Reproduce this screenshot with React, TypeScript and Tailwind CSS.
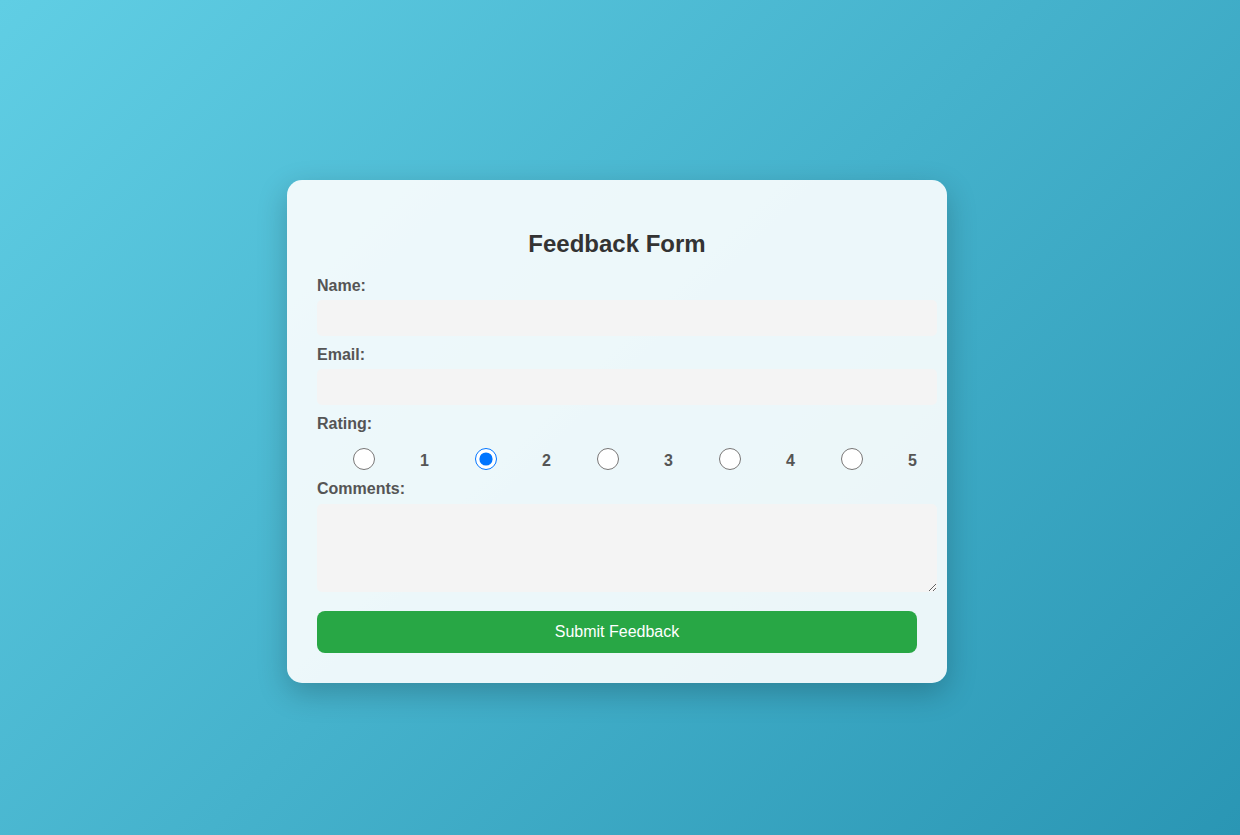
import React from "react";

export default function App() {
  const ratings = [1, 2, 3, 4, 5];
  return (
    <div
      className="min-h-screen w-full flex justify-center items-start pt-[180px] pr-[6px] bg-[linear-gradient(135deg,#60cee4_0%,#2a96b4_100%)]"
      style={{ fontFamily: '"Liberation Sans", Arial, sans-serif', minHeight: 835 }}
    >
      <div className="w-[660px] rounded-[15px] bg-white/90 p-[30px] shadow-[0_10px_30px_rgba(0,0,0,0.22)]">
        <h2 className="text-center text-[24px] leading-[28px] font-bold text-[#333] mt-[20px] mb-[19px]">
          Feedback Form
        </h2>
        <label className="block text-[16px] leading-[18px] font-bold text-[#555] mb-[5px]">Name:</label>
        <input type="text" className="block w-[620px] h-[36px] rounded-[5px] bg-[#f4f4f4] px-[10px] outline-none mb-[10px]" />
        <label className="block text-[16px] leading-[18px] font-bold text-[#555] mb-[5px]">Email:</label>
        <input type="email" className="block w-[620px] h-[36px] rounded-[5px] bg-[#f4f4f4] px-[10px] outline-none mb-[10px]" />
        <label className="block text-[16px] leading-[18px] font-bold text-[#555] mb-[5px]">Rating:</label>
        <div className="flex justify-between items-center h-[42px]">
          {ratings.map((r) => (
            <label key={r} className="w-[112px] flex items-center text-[16px] font-bold text-[#555]">
              <input
                type="radio"
                name="rating"
                defaultChecked={r === 2}
                className="ml-[36px] w-[22px] h-[22px] m-0"
              />
              <span className="ml-auto leading-[18px] mt-[4px]">{r}</span>
            </label>
          ))}
        </div>
        <label className="block text-[16px] leading-[18px] font-bold text-[#555] mb-[6px]">Comments:</label>
        <textarea className="block w-[620px] h-[88px] rounded-[5px] bg-[#f4f4f4] p-[10px] outline-none" />
        <button className="mt-[19px] w-full h-[42px] rounded-[8px] bg-[#28a745] text-white text-[16px]">
          Submit Feedback
        </button>
      </div>
    </div>
  );
}
